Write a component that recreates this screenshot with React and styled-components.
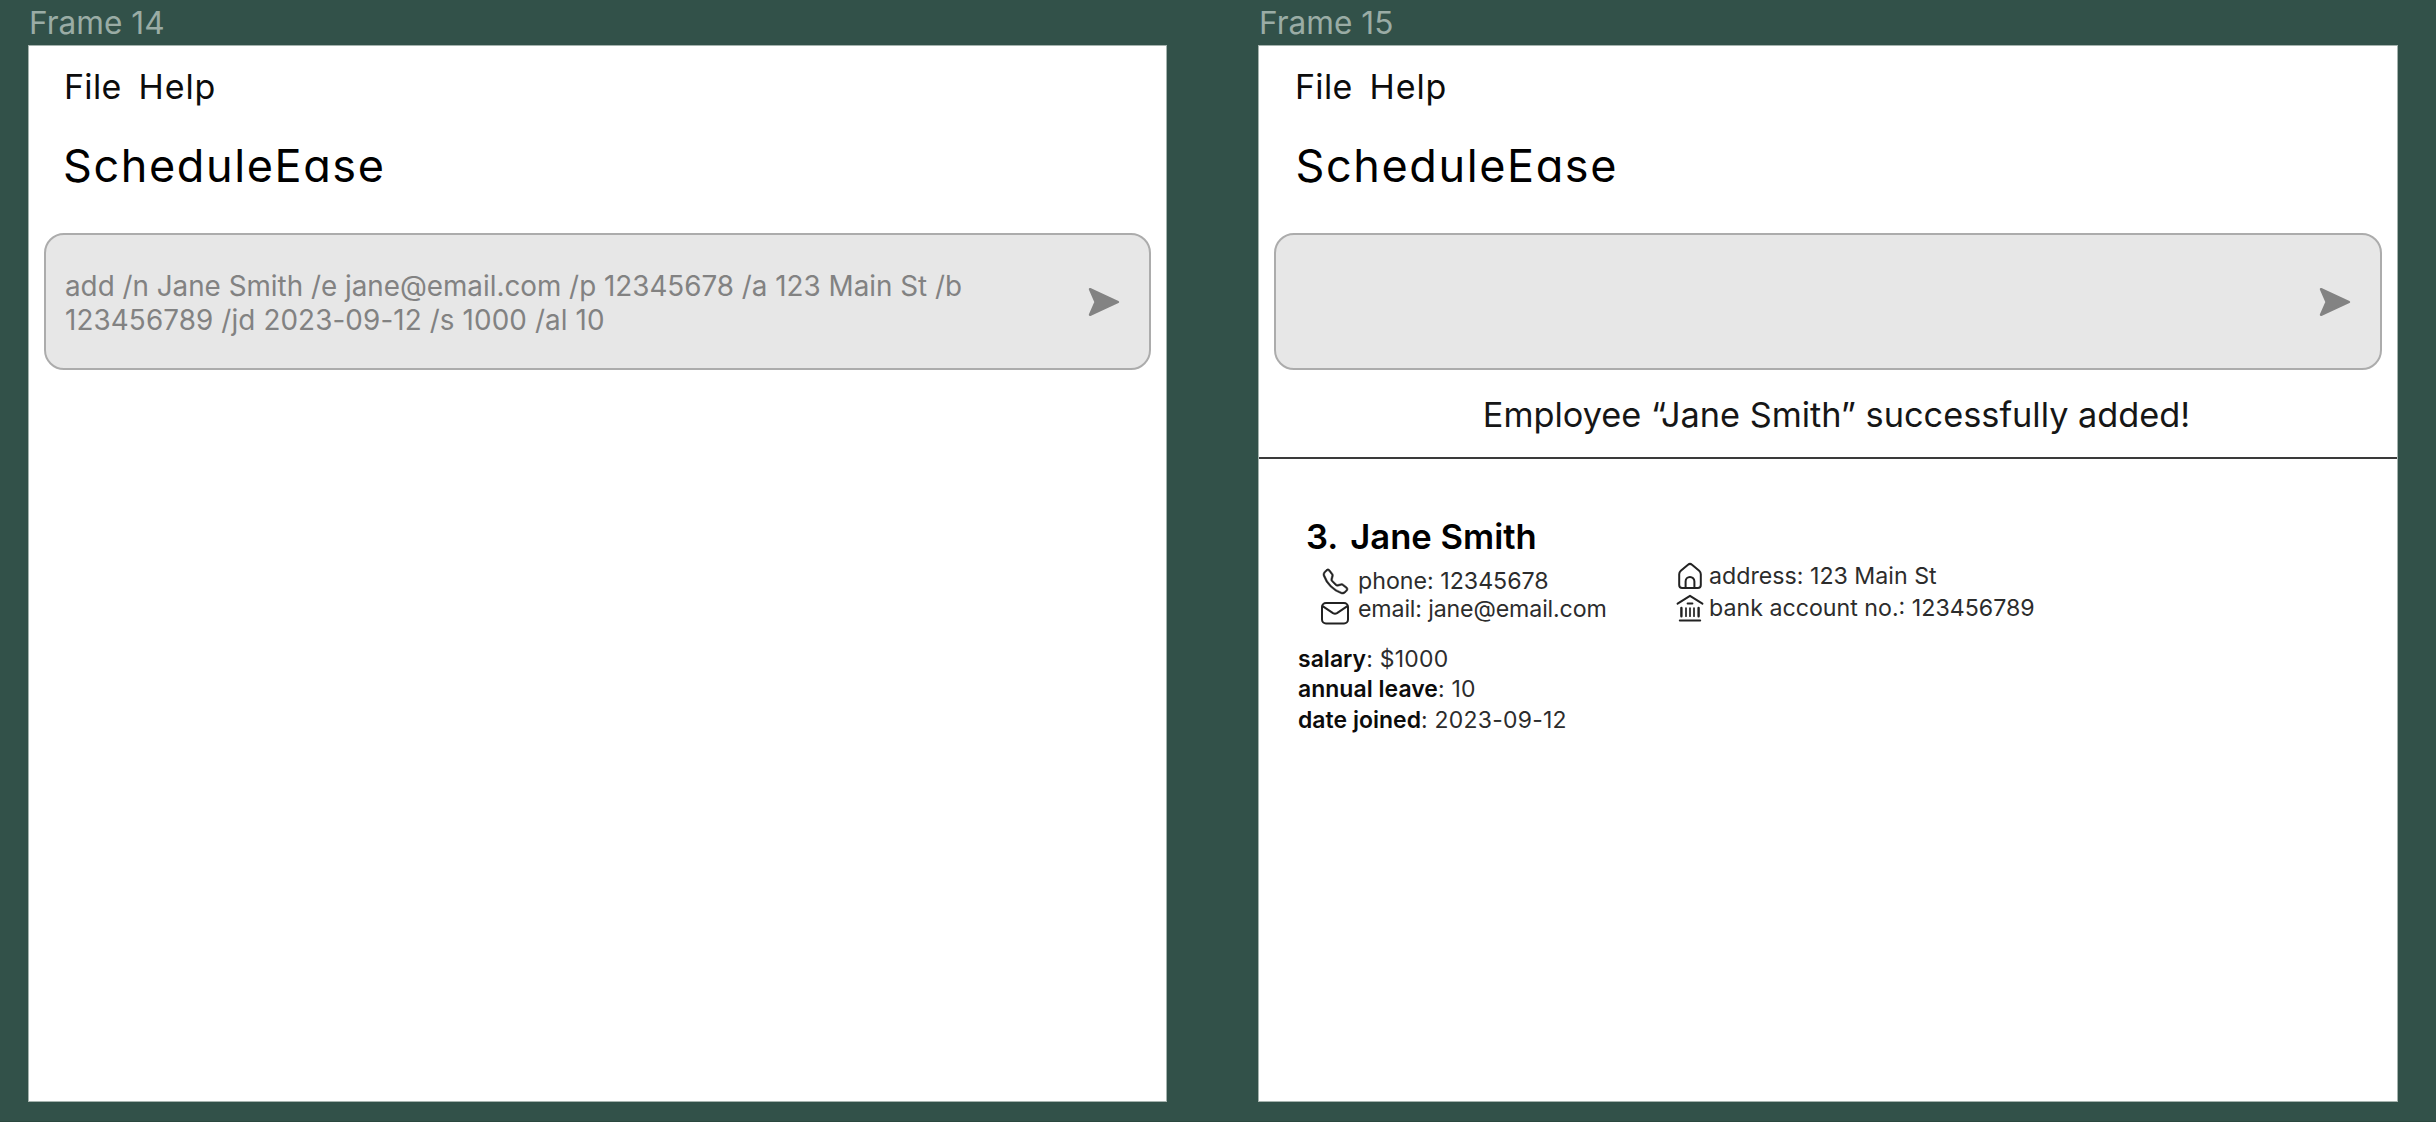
import React from "react";
import styled, { createGlobalStyle } from "styled-components";
import { BsTelephone } from "react-icons/bs";

const GlobalStyle = createGlobalStyle`
  *, *::before, *::after { box-sizing: border-box; }
  body {
    margin: 0;
    background: #325149;
    font-family: Inter, "Liberation Sans", sans-serif;
    color: #000;
  }
`;

const Canvas = styled.main`
  display: flex;
  align-items: flex-start;
  gap: 91px;
  height: 1122px;
  padding-left: 28px;
  overflow: hidden;
  border-bottom: 1px solid #2b483f;
`;

const FrameColumn = styled.section`
  display: flex;
  flex-direction: column;
  width: ${(p) => p.$width}px;
`;

const FrameLabel = styled.div`
  height: 45px;
  padding: 4px 0 0 1px;
  font-size: 31.6px;
  line-height: 38px;
  color: #9aaca5;
  white-space: pre;
`;

const Board = styled.div`
  display: flex;
  flex-direction: column;
  height: 1057px;
  background: #fff;
  border: 1px solid #a5b3ae;
`;

const MenuBar = styled.nav`
  display: flex;
  gap: 17px;
  padding: 21px 0 0 ${(p) => p.$inset}px;
`;

const MenuItem = styled.span`
  font-size: 34px;
  line-height: 40px;
  letter-spacing: ${(p) => p.$tracking}px;
  font-feature-settings: "cv11";
  color: #0c0c0c;
`;

const Title = styled.h1`
  margin: 32px 0 0;
  padding-left: ${(p) => p.$inset}px;
  font-size: 45px;
  font-weight: 400;
  line-height: 54px;
  letter-spacing: 1.6px;
  font-feature-settings: "cv11";
`;

const CommandBox = styled.div`
  display: flex;
  align-items: center;
  justify-content: space-between;
  height: 137px;
  margin: 40px 15px 0 15px;
  padding: 1px 28px 0 19px;
  background: #e7e7e7;
  border: 2px solid #acacac;
  border-radius: 20px;
`;

const CommandText = styled.p`
  display: flex;
  flex-direction: column;
  margin: 0;
  padding-top: 2px;
  font-size: 27.8px;
  line-height: 34.5px;
  color: #828282;
  white-space: pre;
`;

const CommandLine = styled.span`
  letter-spacing: ${(p) => p.$tracking}px;
`;

const SendGlyph = styled.svg`
  flex: none;
  width: 34px;
  height: 30px;
  margin-left: auto;
`;

const Message = styled.div`
  display: flex;
  align-items: center;
  justify-content: center;
  height: 89px;
  padding: 1px 0 0 17px;
  border-bottom: 2px solid #3a3a3a;
  font-size: 34.3px;
  color: #161616;
`;

const Person = styled.article`
  display: flex;
  flex-direction: column;
  padding: 56px 0 0 39px;
`;

const PersonName = styled.h2`
  display: flex;
  gap: 12px;
  margin: 0;
  padding-left: 8px;
  font-size: 34.6px;
  font-weight: 600;
  line-height: 42px;
`;

const Contacts = styled.div`
  display: grid;
  grid-template-columns: 355px auto;
  justify-content: start;
  align-items: start;
  height: 87px;
  padding-left: 22px;
`;

const ContactColumn = styled.div`
  display: flex;
  flex-direction: column;
  padding-top: ${(p) => p.$top}px;
`;

const ContactRow = styled.div`
  display: flex;
  align-items: center;
  gap: ${(p) => p.$gap}px;
  height: ${(p) => p.$height}px;
  font-size: 23.2px;
  line-height: 28px;
  letter-spacing: ${(p) => p.$tracking || 0}px;
  color: #2c2c2c;
  white-space: pre;
`;

const Icon = styled.svg`
  flex: none;
  width: 30px;
  height: 30px;
  margin-top: ${(p) => p.$drop || 0}px;
  fill: none;
  stroke: #222;
  stroke-width: 2;
  stroke-linecap: round;
  stroke-linejoin: round;
`;

const PhoneSlot = styled.span`
  display: flex;
  justify-content: center;
  flex: none;
  width: 30px;
  margin-top: 1px;
  color: #222;

  svg {
    stroke: currentColor;
    stroke-width: 0.3;
    overflow: visible;
  }
`;

const Stat = styled.div`
  font-size: 22.95px;
  line-height: 30.4px;
  letter-spacing: 0.25px;
  color: #2c2c2c;

  strong {
    font-weight: 600;
    letter-spacing: 0.04px;
    color: #0c0c0c;
  }
`;

function SendIcon() {
  return (
    <SendGlyph viewBox="0 0 34 30">
      <path
        d="M3 2.2 31 15 3 27.8 8.6 15Z"
        fill="#838383"
        stroke="#838383"
        strokeWidth="2.4"
        strokeLinejoin="round"
      />
    </SendGlyph>
  );
}

function MailIcon() {
  return (
    <Icon viewBox="0 0 30 30" $drop={7}>
      <rect x="2" y="5" width="26" height="20.4" rx="4" />
      <path d="M2.6 8.2 13 15.2q2 1.2 4 0L27.4 8.2" />
    </Icon>
  );
}

function HomeIcon() {
  return (
    <Icon viewBox="0 0 30 30">
      <path d="M4.2 13.2q0-2 1.6-3.4l7.2-6.1q2-1.6 4 0l7.2 6.1q1.6 1.4 1.6 3.4V24q0 3-3 3H7.2q-3 0-3-3Z" />
      <path d="M10.6 27v-6.6a4.4 4.4 0 0 1 8.8 0V27" />
    </Icon>
  );
}

function BankIcon() {
  return (
    <Icon viewBox="0 0 30 30">
      <path d="M2.6 10.6 15 2.8l12.4 7.8M12.6 10.4h4.8M4.8 27.4h20.4" />
      <path d="M6.4 15v8.2M23.6 15v8.2" strokeWidth="2.4" />
      <path d="M11 15v8.2M15 15v8.2M19 15v8.2" strokeWidth="1.7" />
    </Icon>
  );
}

function AppBoard({ label, width, menuInset, titleInset, command, children }) {
  return (
    <FrameColumn $width={width}>
      <FrameLabel>{label}</FrameLabel>
      <Board>
        <MenuBar $inset={menuInset}>
          <MenuItem $tracking={0.3}>File</MenuItem>
          <MenuItem $tracking={0.9}>Help</MenuItem>
        </MenuBar>
        <Title $inset={titleInset}>ScheduleEase</Title>
        <CommandBox>
          {command && (
            <CommandText>
              {command.map((line) => (
                <CommandLine key={line.text} $tracking={line.tracking}>
                  {line.text}
                </CommandLine>
              ))}
            </CommandText>
          )}
          <SendIcon />
        </CommandBox>
        {children}
      </Board>
    </FrameColumn>
  );
}

const addCommand = [
  {
    text: "add /n Jane Smith /e jane@email.com /p 12345678 /a 123 Main St /b",
    tracking: 0,
  },
  { text: "123456789 /jd 2023-09-12 /s 1000 /al 10", tracking: 0.12 },
];

export default function App() {
  return (
    <>
      <GlobalStyle />
      <Canvas>
        <AppBoard
          label="Frame 14"
          width={1139}
          menuInset={35}
          titleInset={34}
          command={addCommand}
        />
        <AppBoard label="Frame 15" width={1140} menuInset={36} titleInset={36.5}>
          <Message>Employee “Jane Smith” successfully added!</Message>
          <Person>
            <PersonName>
              <span>3.</span>
              <span>Jane Smith</span>
            </PersonName>
            <Contacts>
              <ContactColumn $top={10}>
                <ContactRow $height={28} $gap={8}>
                  <PhoneSlot>
                    <BsTelephone size={25} />
                  </PhoneSlot>
                  phone: 12345678
                </ContactRow>
                <ContactRow $height={28} $gap={8} $tracking={-0.15}>
                  <MailIcon />
                  email: jane@email.com
                </ContactRow>
              </ContactColumn>
              <ContactColumn $top={2.5}>
                <ContactRow $height={32.5} $gap={4}>
                  <HomeIcon />
                  address: 123 Main St
                </ContactRow>
                <ContactRow $height={32.5} $gap={4}>
                  <BankIcon />
                  bank account no.: 123456789
                </ContactRow>
              </ContactColumn>
            </Contacts>
            <Stat>
              <strong>salary</strong>: $1000
            </Stat>
            <Stat>
              <strong>annual leave</strong>: 10
            </Stat>
            <Stat>
              <strong>date joined</strong>: 2023-09-12
            </Stat>
          </Person>
        </AppBoard>
      </Canvas>
    </>
  );
}
